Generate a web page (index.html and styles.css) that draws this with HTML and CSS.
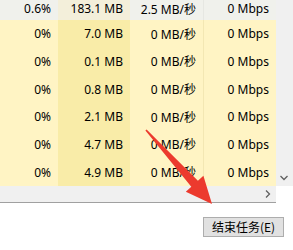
FILE: index.html
```html
<!DOCTYPE html>
<html>
<head>
<meta charset="utf-8">
<link rel="stylesheet" href="styles.css">
</head>
<body>
<div class="window">
  <div class="list-area">
    <div class="table">
      <div class="row hover"><span class="cell">0.6%</span><span class="cell mem">183.1 MB</span><span class="cell">2.5 MB/秒</span><span class="cell net">0 Mbps</span></div>
      <div class="row"><span class="cell">0%</span><span class="cell mem">7.0 MB</span><span class="cell">0 MB/秒</span><span class="cell net">0 Mbps</span></div>
      <div class="row"><span class="cell">0%</span><span class="cell mem">0.1 MB</span><span class="cell">0 MB/秒</span><span class="cell net">0 Mbps</span></div>
      <div class="row"><span class="cell">0%</span><span class="cell mem">0.8 MB</span><span class="cell">0 MB/秒</span><span class="cell net">0 Mbps</span></div>
      <div class="row"><span class="cell">0%</span><span class="cell mem">2.1 MB</span><span class="cell">0 MB/秒</span><span class="cell net">0 Mbps</span></div>
      <div class="row"><span class="cell">0%</span><span class="cell mem">4.7 MB</span><span class="cell">0 MB/秒</span><span class="cell net">0 Mbps</span></div>
      <div class="row"><span class="cell">0%</span><span class="cell mem">4.9 MB</span><span class="cell">0 MB/秒</span><span class="cell net">0 Mbps</span></div>
    </div>
    <div class="vscroll">
      <div class="vbutton">
        <svg width="17" height="17" viewBox="0 0 17 17"><polyline points="4.5,7 8,10.5 11.5,7" fill="none" stroke="#606060" stroke-width="1.3"/></svg>
      </div>
    </div>
  </div>
  <div class="hscroll-row">
    <div class="hscroll">
      <div class="hbutton">
        <svg width="17" height="16" viewBox="0 0 17 16"><polyline points="7,4.5 10.5,8 7,11.5" fill="none" stroke="#606060" stroke-width="1.3"/></svg>
      </div>
    </div>
    <div class="corner"></div>
  </div>
  <div class="footer">
    <button class="end-task">结束任务(E)</button>
  </div>
  <svg class="annot" width="293" height="250" viewBox="0 0 293 250">
    <polygon points="146.6,129.6 197.9,180.7 203.4,175.8 212,204 185.8,191.7 191.3,186.7 145.4,130.4" fill="#ec3a2e"/>
  </svg>
</div>
</body>
</html>
```
FILE: styles.css
```css
html, body {
  margin: 0;
  padding: 0;
  background: #ffffff;
}
body {
  font-family: "Noto Sans", "Noto Sans CJK SC", sans-serif;
  font-size: 12px;
  color: #000;
  width: 293px;
  height: 250px;
  overflow: hidden;
}
.window {
  position: relative;
  width: 293px;
  height: 250px;
}
.list-area {
  display: flex;
  height: 186px;
}
.table {
  width: 276px;
  height: 186px;
  overflow: hidden;
  display: flex;
  flex-direction: column;
}
.row {
  display: grid;
  grid-template-columns: 58px 72px 73px 73px;
  height: 27.67px;
  flex: none;
  background: #fff4c4;
}
.cell {
  display: flex;
  align-items: center;
  justify-content: flex-end;
  padding-right: 7px;
  white-space: nowrap;
}
.cell.mem {
  background: #f9eca8;
}
.cell.net {
  border-left: 1px solid #f3e7b3;
}
.row.hover {
  height: 20px;
  background: #f0f1ec;
}
.row.hover .cell {
  align-items: flex-start;
}
.row.hover .cell.mem {
  background: #f3efda;
}
.row.hover .cell.net {
  border-left-color: #e6e7e2;
}
.vscroll {
  width: 17px;
  height: 186px;
  background: #f0f0f0;
  display: flex;
  flex-direction: column;
  justify-content: flex-end;
}
.vbutton {
  height: 17px;
  display: flex;
}
.hscroll-row {
  display: flex;
  height: 16px;
}
.hscroll {
  width: 276px;
  height: 16px;
  background: #f0f0f0;
  border-bottom: 1px solid #a0a0a0;
  display: flex;
  justify-content: flex-end;
}
.hbutton {
  width: 17px;
  height: 16px;
  display: flex;
}
.corner {
  width: 17px;
  background: #ffffff;
}
.footer {
  display: flex;
  justify-content: flex-end;
  padding: 15px 9px 0 0;
}
.end-task {
  width: 81px;
  height: 20px;
  margin: 0;
  padding: 0;
  background: #e1e1e1;
  border: 1px solid #adadad;
  border-radius: 0;
  font-family: "Noto Sans CJK SC", "Noto Sans", sans-serif;
  font-size: 12px;
  color: #000;
  line-height: 18px;
}
.annot {
  position: absolute;
  left: 0;
  top: 0;
  pointer-events: none;
}
```
